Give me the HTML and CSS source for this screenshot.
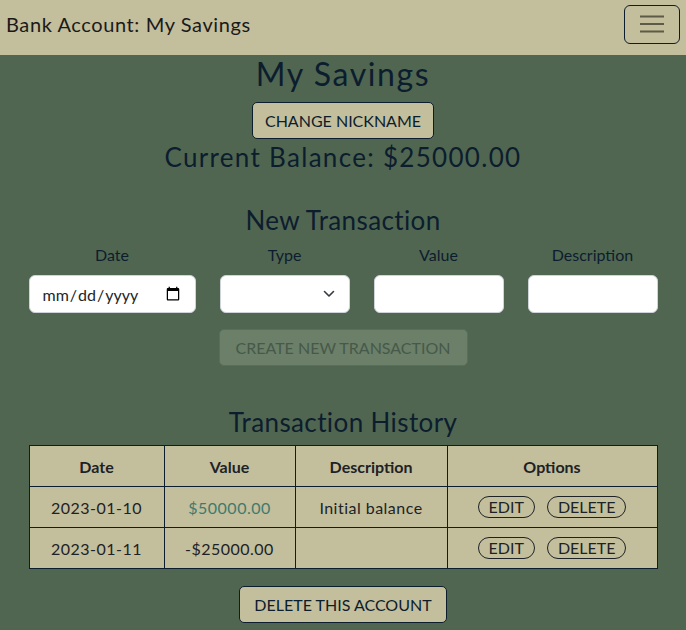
FILE: index.html
```html
<!DOCTYPE html>
<html>
<head>
<meta charset="utf-8">
<link rel="stylesheet" href="styles.css">
</head>
<body>
<nav class="navbar">
  <span class="brand">Bank Account: My Savings</span>
  <button class="toggler" type="button">
    <svg width="26" height="20" viewBox="0 0 26 20"><path d="M1 2.5h24M1 10h24M1 17.5h24" stroke="#5d5a45" stroke-width="2.2" fill="none"/></svg>
  </button>
</nav>
<main class="main">
  <h1 class="title">My Savings</h1>
  <button class="btn">CHANGE NICKNAME</button>
  <h2 class="balance">Current Balance: $25000.00</h2>

  <h2 class="section">New Transaction</h2>
  <div class="form-row">
    <div class="field f-date">
      <label>Date</label>
      <input type="date" class="input">
    </div>
    <div class="field f-small">
      <label>Type</label>
      <div class="select-wrap">
        <select class="input select"><option></option></select>
        <svg class="chev" width="12" height="8" viewBox="0 0 12 8"><path d="M1.5 1.5l4.5 4.5 4.5-4.5" stroke="#343a40" stroke-width="1.6" fill="none" stroke-linecap="round" stroke-linejoin="round"/></svg>
      </div>
    </div>
    <div class="field f-small">
      <label>Value</label>
      <input type="text" class="input">
    </div>
    <div class="field f-small">
      <label>Description</label>
      <input type="text" class="input">
    </div>
  </div>
  <button class="btn btn-disabled" disabled>CREATE NEW TRANSACTION</button>

  <h2 class="section history">Transaction History</h2>
  <table class="table">
    <thead>
      <tr><th class="c1">Date</th><th class="c2">Value</th><th class="c3">Description</th><th class="c4">Options</th></tr>
    </thead>
    <tbody>
      <tr><td>2023-01-10</td><td class="pos">$50000.00</td><td>Initial balance</td><td><span class="pill">EDIT</span><span class="pill">DELETE</span></td></tr>
      <tr><td>2023-01-11</td><td>-$25000.00</td><td></td><td><span class="pill">EDIT</span><span class="pill">DELETE</span></td></tr>
    </tbody>
  </table>
  <button class="btn btn-delete">DELETE THIS ACCOUNT</button>
</main>
</body>
</html>
```
FILE: styles.css
```css
html, body {
  margin: 0;
  padding: 0;
}
body {
  background: #506651;
  font-family: "Lato", "Noto Sans", sans-serif;
  color: #0c1d2e;
  width: 686px;
  height: 630px;
  overflow: hidden;
}
.navbar {
  height: 55px;
  background: #c3be9c;
  display: flex;
  align-items: center;
  justify-content: space-between;
  padding: 0 6px;
  box-sizing: border-box;
}
.brand {
  font-size: 20px;
  color: #1a1a1a;
  margin-top: -7px;
  letter-spacing: 0.03em;
}
.toggler {
  width: 56px;
  height: 39px;
  margin-top: -7px;
  background: transparent;
  border: 1px solid #0c1d2e;
  border-radius: 6px;
  display: flex;
  align-items: center;
  justify-content: center;
  padding: 0;
}
.main {
  display: flex;
  flex-direction: column;
  align-items: center;
}
.title {
  font-size: 32px;
  font-weight: 400;
  margin: -1px 0 8px;
  line-height: 40px;
  letter-spacing: 0.05em;
}
.btn {
  font-family: inherit;
  font-size: 16px;
  color: #0c1d2e;
  background: #c3be9c;
  border: 1px solid #0c1d2e;
  border-radius: 5px;
  height: 37px;
  padding: 0 12px;
}
.balance {
  font-size: 26px;
  font-weight: 400;
  margin: 0;
  line-height: 36px;
  letter-spacing: 0.05em;
}
.section {
  font-size: 26px;
  font-weight: 400;
  margin: 26px 0 0;
  line-height: 38px;
  letter-spacing: 0.015em;
}
.form-row {
  display: flex;
  gap: 24px;
  margin-top: 6px;
}
.field {
  display: flex;
  flex-direction: column;
  align-items: center;
}
.field label {
  font-size: 16px;
  line-height: 20px;
  margin-bottom: 10px;
  color: #0c1d2e;
}
.f-date { width: 167px; }
.f-small { width: 130px; }
.input {
  width: 100%;
  height: 38px;
  box-sizing: border-box;
  border: 1px solid #ced4da;
  border-radius: 6px;
  background: #fff;
  font-family: inherit;
  font-size: 16px;
  color: #212529;
  padding: 0 12px;
}
.select-wrap {
  position: relative;
  width: 100%;
}
.select {
  appearance: none;
  -webkit-appearance: none;
}
.chev {
  position: absolute;
  right: 15px;
  top: 15px;
  pointer-events: none;
}
.btn-disabled {
  margin-top: 16px;
  background: #6c7f68;
  color: #46594a;
  border-color: #5a6e58;
  width: 249px;
}
.history {
  margin-top: 37px;
}
.table {
  margin-top: 4px;
  border-collapse: collapse;
  background: #c3be9c;
  width: 629px;
  font-size: 16px;
  color: #1d2226;
}
.table th, .table td {
  border: 1px solid #0c1d2e;
  height: 40px;
  text-align: center;
  padding: 0;
}
.table td { letter-spacing: 0.03em; }
.table th { font-weight: 700; }
.c1 { width: 134px; }
.c2 { width: 130px; }
.c3 { width: 151px; }
.pos { color: #3f7a6e; }
.pill {
  display: inline-block;
  border: 1px solid #1d2226;
  border-radius: 12px;
  padding: 0 10px;
  line-height: 20px;
  margin: 0 6px;
  letter-spacing: 0;
}
.btn-delete {
  margin-top: 17px;
  padding: 0 14px;
}
```
